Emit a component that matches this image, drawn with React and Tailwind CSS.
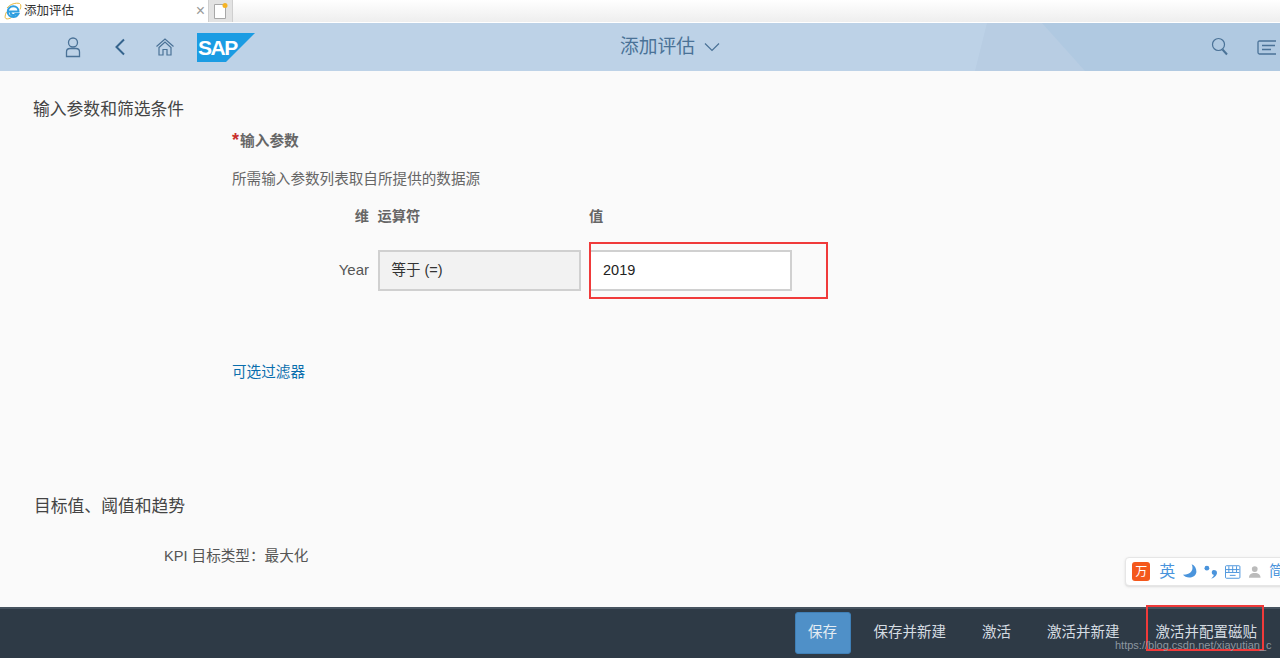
import React from 'react';

const cjk = '"Liberation Sans","Noto Sans CJK SC",sans-serif';

const IeIcon = () => (
    <svg width="18" height="18" viewBox="0 0 18 18" fill="none">
        <path d="M3 6C6 2 12 .5 15.500 1.500c2 1 1.500 4 .5 6M2.500 10c-1.500 3-2 6-.5 6.700 1.500.6 4-.2 5.500-1.200" stroke="#e8b840" strokeWidth="1" />
        <path d="M4 9.500h10.500c0-3.300-2.300-5.300-5.200-5.300C6.300 4.200 3.700 6.600 3.700 9.700c0 3.100 2.400 5.300 5.600 5.300 2.300 0 4-1.200 5-3h-3.100c-.5.700-1.100 1-1.900 1-1.500 0-2.700-1.100-2.800-2.600" stroke="#2f9fe0" strokeWidth="2" />
    </svg>
);

const NewTabIcon = () => (
    <svg width="18" height="18" viewBox="0 0 18 18" fill="none">
        <path d="M2.500 2.500h9l2 2v12h-11z" fill="#fff" stroke="#a8a8a8" />
        <circle cx="13" cy="3.500" r="2.500" fill="#f5b324" />
    </svg>
);

const UserIcon = () => (
    <svg width="20" height="22" viewBox="0 0 20 22" fill="none" stroke="#4a7297" strokeWidth="1.300">
        <circle cx="10" cy="6.500" r="4.500" />
        <path d="M3.500 20.500v-4.500c0-2 1.500-3.500 3.500-3.500h6c2 0 3.500 1.500 3.500 3.500v4.500z" />
    </svg>
);

const BackIcon = () => (
    <svg width="20" height="22" viewBox="0 0 20 22" fill="none" stroke="#35648d" strokeWidth="2">
        <path d="M14 3.500 6.500 11l7.500 7.500" />
    </svg>
);

const HomeIcon = () => (
    <svg width="20" height="20" viewBox="0 0 20 20" fill="none" stroke="#4a7297" strokeWidth="1.200">
        <path d="M1.500 9.500 10 2l8.500 7.500M4 10.500 10 5l6 5.500V18h-4v-5.500H8V18H4z" />
    </svg>
);

const SapLogo = () => (
    <div className="relative w-[58px] h-[29px]">
        <svg width="58" height="29" viewBox="0 0 58 29" className="absolute inset-0">
            <path d="M0 0h58L29 29H0z" fill="#1b9ce3" />
        </svg>
        <span className="absolute left-[1px] top-[4px] text-white text-[21px] leading-[22px] font-bold tracking-[-1.500px]" style={{ fontFamily: '"Liberation Sans",sans-serif' }}>
            SAP
        </span>
    </div>
);

const ChevronDown = () => (
    <svg width="16" height="10" viewBox="0 0 16 10" fill="none" stroke="#4a7297" strokeWidth="1.200">
        <path d="M1 1.500 8 8.500l7-7" />
    </svg>
);

const SearchIcon = () => (
    <svg width="18" height="20" viewBox="0 0 18 20" fill="none" stroke="#4a7297">
        <circle cx="7.500" cy="7.500" r="6" strokeWidth="1.200" />
        <path d="M11.500 12.500 16 17.500" strokeWidth="2" />
    </svg>
);

const ListIcon = () => (
    <svg width="19" height="15" viewBox="0 0 19 15" fill="none" stroke="#4a7297" strokeWidth="1.300">
        <path d="M19 1H2.500Q1 1 1 2.500v10Q1 14 2.500 14H19M5 5.500h13M5 9.500h9" />
    </svg>
);

const TabBar = () => (
    <div className="flex h-[23px] bg-gradient-to-b from-white to-[#eeeeee] border-b border-white">
        <div className="flex items-center w-[208px] bg-white pl-[4px] pr-[3px]">
            <IeIcon />
            <span className="ml-[2px] text-[12.500px] text-[#333]">添加评估</span>
            <span className="ml-auto text-[16px] leading-none text-[#999]">×</span>
        </div>
        <div className="flex items-center justify-center w-[25px] bg-[#e3e3e3] border-x border-[#cfcfcf]">
            <NewTabIcon />
        </div>
    </div>
);

const Header = () => (
    <header className="relative flex items-center h-[48px] pl-[63px] bg-[#bdd2e7] overflow-hidden">
        <svg className="absolute inset-0" width="1280" height="48" viewBox="0 0 1280 48">
            <path d="M987 0H1280V48H975z" fill="#b8cde3" />
            <path d="M1042 0H1280V48H1085z" fill="#b0c9e1" />
        </svg>
        <div className="relative flex items-center">
            <UserIcon />
            <div className="ml-[27px]"><BackIcon /></div>
            <div className="ml-[25px]"><HomeIcon /></div>
            <div className="ml-[22px]"><SapLogo /></div>
        </div>
        <div className="relative flex items-center ml-[365px]">
            <span className="text-[18.750px] text-[#4a7297]">添加评估</span>
            <div className="ml-[9px]"><ChevronDown /></div>
        </div>
        <div className="relative flex items-center ml-auto gap-[28px] pr-[4px]">
            <SearchIcon />
            <ListIcon />
        </div>
    </header>
);

const FooterButton = ({ children }) => (
    <button className="h-[42px] px-[18px] pt-[1px] text-[14.500px] text-[#d5dce2]">{children}</button>
);

const Footer = () => (
    <footer className="flex items-center justify-end h-[51px] pr-[5px] pb-[2px] bg-[#2e3a46] border-t-2 border-[#46535f]">
        <button className="w-[56px] h-[42px] mr-[5px] pt-[1px] rounded-[3px] bg-[#4f90c8] border border-[#3f7fb6] text-[14.500px] text-[#e4ecf3]">
            保存
        </button>
        <FooterButton>保存并新建</FooterButton>
        <FooterButton>激活</FooterButton>
        <FooterButton>激活并新建</FooterButton>
        <FooterButton>激活并配置磁贴</FooterButton>
    </footer>
);

const ImeBar = () => (
    <div className="absolute left-[1125px] top-[557px] flex items-center w-[160px] h-[29px] pl-[6px] bg-white border border-[#e6e6e6] rounded-[4px] shadow-sm">
        <div className="flex items-center justify-center w-[19px] h-[19px] rounded-[3px] bg-[#f4581c] text-white text-[12px]">万</div>
        <span className="ml-[9px] text-[16px] text-[#4a94dc]">英</span>
        <svg className="ml-[7px]" width="16" height="17" viewBox="0 0 16 17"><path d="M10 1c2.500 5 0 11-9 11 3 4 13 4 14-3 0-4-2-7-5-8z" fill="#4a94dc" /></svg>
        <svg className="ml-[6px]" width="14" height="17" viewBox="0 0 14 17" fill="#4a94dc"><circle cx="3" cy="5" r="2.500" /><path d="M10 7c2.500 0 3.500 1 3.500 3S11 15 7.500 16c2-2 3-3 2.500-4-2.500 0-2.500-5 0-5z" /></svg>
        <svg className="ml-[8px]" width="16" height="14" viewBox="0 0 16 14" fill="none" stroke="#4a94dc"><rect x=".5" y=".5" width="15" height="13" rx="1" /><path d="M1 4.500h14M1 7.500h14M4 1v6M8 1v6M12 1v6M5 10.500h6" /></svg>
        <svg className="ml-[7px]" width="14" height="14" viewBox="0 0 14 14" fill="#bbb"><circle cx="7" cy="4" r="3" /><path d="M1 13c0-3 2-5 6-5s6 2 6 5z" /></svg>
        <span className="ml-[8px] text-[15px] text-[#4a94dc]">简</span>
    </div>
);

const App = () => {
    return (
        <div className="relative flex flex-col w-[1280px] h-[658px] overflow-hidden bg-[#fafafa]" style={{ fontFamily: cjk }}>
            <TabBar />
            <Header />
            <main className="flex-1 pt-[27px] pl-[33px] text-[#555]">
                <h2 className="text-[16.800px] leading-[24px] text-[#444]">输入参数和筛选条件</h2>
                <div className="ml-[199px]">
                    <h3 className="mt-[9px] text-[14.700px] leading-[20px] font-bold text-[#666]">
                        <span className="mr-[1px] text-[18px] leading-none text-[#c9302c]">*</span>输入参数
                    </h3>
                    <p className="mt-[18px] text-[14.600px] leading-[20px] text-[#666]">所需输入参数列表取自所提供的数据源</p>
                    <div className="grid grid-cols-[137px_203px_203px] gap-x-[8.500px] mt-[17px] text-[14.200px] text-[#666]">
                        <div className="h-[20px] leading-[20px] text-right font-bold">维</div>
                        <div className="h-[20px] leading-[20px] font-bold">运算符</div>
                        <div className="h-[20px] leading-[20px] font-bold">值</div>
                        <div className="flex items-center justify-end h-[41px] mt-[24px] text-[15px] text-[#555]">Year</div>
                        <div className="flex items-center h-[41px] mt-[24px] pl-[12px] bg-[#f2f2f2] border-2 border-[#d0d0d0] text-[14.500px] text-[#333]">等于 (=)</div>
                        <div className="flex items-center h-[41px] mt-[24px] pl-[12px] bg-white border-2 border-[#d0d0d0] text-[14.500px] text-[#222]">2019</div>
                    </div>
                    <a className="block mt-[71px] text-[14.600px] leading-[20px] text-[#0a6ead]">可选过滤器</a>
                </div>
                <h2 className="mt-[113px] ml-[1px] text-[16.800px] leading-[24px] text-[#444]">目标值、阈值和趋势</h2>
                <p className="mt-[27px] ml-[131px] text-[14.600px] leading-[20px] text-[#555]">KPI 目标类型：最大化</p>
            </main>
            <Footer />

            <ImeBar />
            {/* red annotation boxes from the screenshot */}
            <div className="absolute left-[589px] top-[242px] w-[239px] h-[57px] border-2 border-[#f03a3a]" />
            <div className="absolute left-[1146px] top-[605px] w-[118px] h-[46px] border-2 border-[#f03a3a]" />
            <span className="absolute left-[1115px] top-[637px] text-[11px] leading-[16px] text-[#8d97a0]" style={{ fontFamily: '"Liberation Sans",sans-serif' }}>
                https://blog.csdn.net/xiayutian_c
            </span>
        </div>
    );
};

export default App;
